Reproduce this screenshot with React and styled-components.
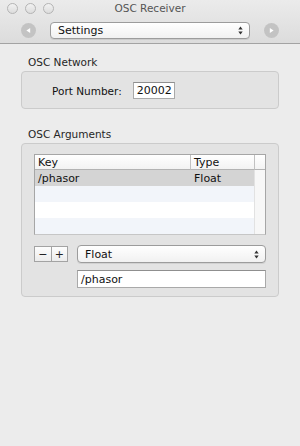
import React from 'react'
import styled, { createGlobalStyle } from 'styled-components'

const GlobalStyle = createGlobalStyle`
  html, body { margin: 0; padding: 0; background: #ececec; }
  * { box-sizing: border-box; }
`

const rows = [
  { key: '/phasor', type: 'Float', selected: true },
  { key: '', type: '' },
  { key: '', type: '' },
  { key: '', type: '' },
]

const Updown = () => (
  <svg width="5" height="9" viewBox="0 0 5 9">
    <path d="M2.5 0.5 L4.7 3.4 L0.3 3.4 Z" fill="#333" />
    <path d="M2.5 8.5 L4.7 5.6 L0.3 5.6 Z" fill="#333" />
  </svg>
)

const NavArrow = ({ dir }) => (
  <NavCircle>
    <svg width="15" height="15" viewBox="0 0 15 15">
      {dir === 'left'
        ? <path d="M5.4 7.5 L9.2 5 L9.2 10 Z" fill="#fff" />
        : <path d="M9.6 7.5 L5.8 5 L5.8 10 Z" fill="#fff" />}
    </svg>
  </NavCircle>
)

const App = () => {
  return (
    <Window>
      <GlobalStyle />
      <Header>
        <TitleBar>
          <Lights>
            <Light />
            <Light />
            <Light />
          </Lights>
          <Title>OSC Receiver</Title>
          <span />
        </TitleBar>
        <Toolbar>
          <NavArrow dir="left" />
          <Popup $wide>
            <span>Settings</span>
            <Updown />
          </Popup>
          <NavArrow dir="right" />
        </Toolbar>
      </Header>

      <Content>
        <GroupLabel>OSC Network</GroupLabel>
        <GroupBox $pad="10px 0 9px 30px">
          <PortRow>
            <Label>Port Number:</Label>
            <Field $width="42px">20002</Field>
          </PortRow>
        </GroupBox>

        <GroupLabel $top="19px">OSC Arguments</GroupLabel>
        <GroupBox $pad="10px 12px 8px 12px">
          <Table>
            <HeadCell>Key</HeadCell>
            <HeadCell $divider>Type</HeadCell>
            <HeadCell $divider />
            {rows.map((r, i) => (
              <React.Fragment key={i}>
                <Cell $selected={r.selected} $odd={i % 2 === 1}>{r.key}</Cell>
                <Cell $selected={r.selected} $odd={i % 2 === 1} $type>{r.type}</Cell>
                <Track />
              </React.Fragment>
            ))}
          </Table>

          <Controls>
            <Segment>
              <SegButton>−</SegButton>
              <SegButton>+</SegButton>
            </Segment>
            <Popup>
              <span>Float</span>
              <Updown />
            </Popup>
            <span />
            <Field>/phasor</Field>
          </Controls>
        </GroupBox>
      </Content>
    </Window>
  )
}

const Window = styled.div`
  width: 300px;
  height: 446px;
  background: #ececec;
  font-family: "DejaVu Sans", "Liberation Sans", sans-serif;
  font-size: 10.5px;
  color: #1b1b1b;
  overflow: hidden;
`

const Header = styled.div`
  background: linear-gradient(#ebebeb, #dcdcdc);
  border-bottom: 1px solid #a3a3a3;
`

const TitleBar = styled.div`
  height: 15px;
  display: grid;
  grid-template-columns: 1fr auto 1fr;
  align-items: center;
`

const Lights = styled.div`
  display: flex;
  gap: 7px;
  padding-left: 7px;
  padding-top: 1px;
`

const Light = styled.div`
  width: 11px;
  height: 11px;
  border-radius: 50%;
  border: 1px solid #b4b4b4;
  background: linear-gradient(#f2f2f2, #dcdcdc);
`

const Title = styled.div`
  font-size: 10.5px;
  line-height: 15px;
  color: #555;
  padding-top: 1px;
`

const Toolbar = styled.div`
  height: 28px;
  display: flex;
  align-items: center;
  gap: 14px;
  padding: 2px 0 0 21px;
`

const NavCircle = styled.div`
  width: 15px;
  height: 15px;
  border-radius: 50%;
  background: #c3c3c3;
  display: flex;
  margin-top: 1px;
`

const Popup = styled.div`
  width: ${p => (p.$wide ? '200px' : 'auto')};
  height: ${p => (p.$wide ? '17px' : '18px')};
  display: flex;
  align-items: center;
  justify-content: space-between;
  padding: 0 6px 0 7px;
  background: linear-gradient(#ffffff, #f1f1f1);
  border: 1px solid #9c9c9c;
  border-radius: 4px;
  box-shadow: 0 1px 0 rgba(0, 0, 0, 0.08);
  font-size: 11px;
  color: #111;
`

const Content = styled.div`
  padding: 12px 21px 0 21px;
`

const GroupLabel = styled.div`
  margin: ${p => p.$top || '0'} 0 2px 7px;
  line-height: 13px;
  font-size: 10.5px;
  color: #262626;
`

const GroupBox = styled.div`
  background: #e3e3e3;
  border: 1px solid #cbcbcb;
  border-radius: 4px;
  padding: ${p => p.$pad};
`

const PortRow = styled.div`
  display: flex;
  align-items: center;
  gap: 11px;
`

const Label = styled.span`
  font-size: 10.5px;
  color: #111;
`

const Field = styled.div`
  width: ${p => p.$width || 'auto'};
  height: ${p => (p.$width ? '17px' : '18px')};
  background: #fff;
  border: 1px solid #a9a9a9;
  border-top-color: #8f8f8f;
  display: flex;
  align-items: center;
  padding-left: 3px;
  font-size: 11px;
  color: #111;
`

const Table = styled.div`
  display: grid;
  grid-template-columns: 155px 64px 1fr;
  grid-template-rows: 15px repeat(4, 16px);
  border: 1px solid #a6a6a6;
  border-bottom-color: #c6c6c6;
  background: #fff;
  overflow: hidden;
  font-size: 11px;
`

const HeadCell = styled.div`
  display: flex;
  align-items: center;
  padding-left: 3px;
  background: linear-gradient(#ffffff, #f3f3f3);
  border-bottom: 1px solid #b3b3b3;
  border-left: ${p => (p.$divider ? '1px solid #c1c1c1' : 'none')};
  color: #111;
`

const Cell = styled.div`
  display: flex;
  align-items: center;
  padding-left: ${p => (p.$type ? '4px' : '3px')};
  background: ${p => (p.$selected ? '#d4d4d4' : p.$odd ? '#f2f5fa' : '#ffffff')};
  color: #111;
`

const Track = styled.div`
  background: #f7f7f7;
  border-left: 1px solid #e2e2e2;
`

const Controls = styled.div`
  display: grid;
  grid-template-columns: 34px 1fr;
  column-gap: 9px;
  row-gap: 7px;
  margin-top: 10px;
  align-items: center;
`

const Segment = styled.div`
  display: flex;
  height: 16px;
  border: 1px solid #a3a3a3;
  background: linear-gradient(#fdfdfd, #ececec);
`

const SegButton = styled.div`
  flex: 1;
  display: flex;
  align-items: center;
  justify-content: center;
  font-size: 11px;
  color: #222;
  & + & { border-left: 1px solid #a3a3a3; }
`

export default App
